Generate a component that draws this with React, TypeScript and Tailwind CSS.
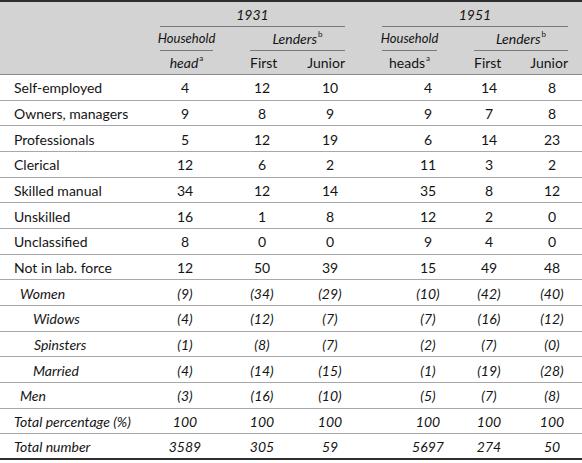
import React from "react";

type Row = { label: string; indent: number; italic: boolean; values: string[] };

const rows: Row[] = [
  { label: "Self-employed", indent: 14, italic: false, values: ["4", "12", "10", "4", "14", "8"] },
  { label: "Owners, managers", indent: 14, italic: false, values: ["9", "8", "9", "9", "7", "8"] },
  { label: "Professionals", indent: 14, italic: false, values: ["5", "12", "19", "6", "14", "23"] },
  { label: "Clerical", indent: 14, italic: false, values: ["12", "6", "2", "11", "3", "2"] },
  { label: "Skilled manual", indent: 14, italic: false, values: ["34", "12", "14", "35", "8", "12"] },
  { label: "Unskilled", indent: 14, italic: false, values: ["16", "1", "8", "12", "2", "0"] },
  { label: "Unclassified", indent: 14, italic: false, values: ["8", "0", "0", "9", "4", "0"] },
  { label: "Not in lab. force", indent: 14, italic: false, values: ["12", "50", "39", "15", "49", "48"] },
  { label: "Women", indent: 20, italic: true, values: ["(9)", "(34)", "(29)", "(10)", "(42)", "(40)"] },
  { label: "Widows", indent: 33, italic: true, values: ["(4)", "(12)", "(7)", "(7)", "(16)", "(12)"] },
  { label: "Spinsters", indent: 34, italic: true, values: ["(1)", "(8)", "(7)", "(2)", "(7)", "(0)"] },
  { label: "Married", indent: 33, italic: true, values: ["(4)", "(14)", "(15)", "(1)", "(19)", "(28)"] },
  { label: "Men", indent: 20, italic: true, values: ["(3)", "(16)", "(10)", "(5)", "(7)", "(8)"] },
  { label: "Total percentage (%)", indent: 14, italic: true, values: ["100", "100", "100", "100", "100", "100"] },
  { label: "Total number", indent: 14, italic: true, values: ["3589", "305", "59", "5697", "274", "50"] },
];

const cellMargins = ["ml-0", "ml-[27px]", "ml-[18px]", "ml-[48px]", "ml-[11px]", "ml-[13px]"];

function Sup({ children }: { children: React.ReactNode }) {
  return <span className="text-[8px] relative -top-[5px] not-italic ml-[1px]">{children}</span>;
}

export default function App() {
  return (
    <div
      className="w-[582px] h-[463px] bg-white text-[#141414] text-[14px] leading-none"
      style={{ fontFamily: "Lato, 'Open Sans', sans-serif" }}
    >
      {/* Header */}
      <div className="bg-[#d3d3d3] border-t-2 border-[#2e2e2e] border-b border-b-[#8a8a8a]">
        <div className="flex h-[25px]">
          <div className="w-[160px] shrink-0" />
          <div className="w-[185px] shrink-0 border-b border-[#7a7a7a] flex items-center justify-center italic pt-[1px]">1931</div>
          <div className="ml-[37px] w-[186px] shrink-0 border-b border-[#7a7a7a] flex items-center justify-center italic pt-[1px]">1951</div>
        </div>
        <div className="flex h-[24px]">
          <div className="w-[160px] shrink-0" />
          <div className="w-[53px] shrink-0 border-b border-[#7a7a7a] flex items-center justify-center italic text-[13px]">Household</div>
          <div className="ml-[37px] w-[95px] shrink-0 border-b border-[#7a7a7a] flex items-center justify-center italic">
            Lenders<Sup>b</Sup>
          </div>
          <div className="ml-[37px] w-[55px] shrink-0 border-b border-[#7a7a7a] flex items-center justify-center italic text-[13px]">Household</div>
          <div className="ml-[37px] w-[94px] shrink-0 border-b border-[#7a7a7a] flex items-center justify-center italic">
            Lenders<Sup>b</Sup>
          </div>
        </div>
        <div className="flex h-[23px]">
          <div className="w-[160px] shrink-0" />
          <div className="w-[53px] shrink-0 flex items-center justify-center italic">
            head<Sup>a</Sup>
          </div>
          <div className="ml-[37px] w-[95px] shrink-0 flex items-center justify-between">
            <span>First</span>
            <span>Junior</span>
          </div>
          <div className="ml-[37px] w-[55px] shrink-0 flex items-center justify-center">
            heads<Sup>a</Sup>
          </div>
          <div className="ml-[37px] w-[94px] shrink-0 flex items-center justify-between">
            <span>First</span>
            <span>Junior</span>
          </div>
        </div>
      </div>
      {/* Body */}
      <div>
        {rows.map((r, i) => {
          const last = i === rows.length - 1;
          return (
            <div
              key={r.label}
              className={
                "flex items-center pt-[2px] h-[25.67px] " +
                (last ? "border-b-2 border-[#2e2e2e]" : "border-b border-[#a8a8a8]") +
                (r.italic ? " italic" : "")
              }
            >
              <div className="w-[160px] shrink-0" style={{ paddingLeft: r.indent }}>
                {r.label}
              </div>
              {r.values.map((v, j) => (
                <div key={j} className={"w-[50px] shrink-0 text-center " + cellMargins[j]}>
                  {v}
                </div>
              ))}
            </div>
          );
        })}
      </div>
    </div>
  );
}
